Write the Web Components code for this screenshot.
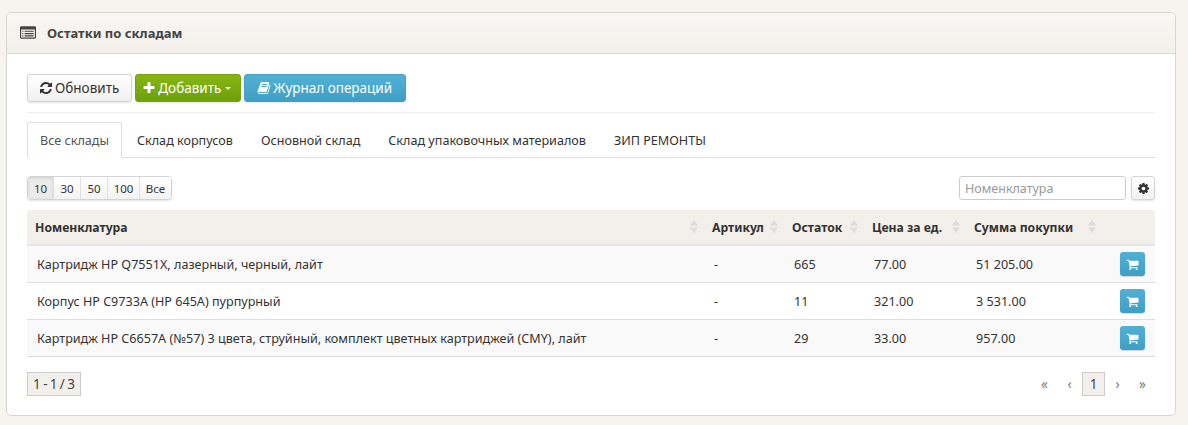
<!DOCTYPE html>
<html lang="ru">
<head>
<meta charset="utf-8">
<title>Остатки по складам</title>
<style>
  html, body { margin: 0; height: 100%; }
  body {
    background: #f7f4f0;
    color: #333;
    font: 12.6px "Noto Sans", "Open Sans", sans-serif;
    padding: 12px 12px 0 6px;
    box-sizing: border-box;
    overflow: hidden;
  }
</style>
</head>
<body>
<stock-panel heading="Остатки по складам">
  <div slot="toolbar" style="display:flex;gap:3px">
    <ui-button icon="refresh">Обновить</ui-button>
    <ui-button icon="plus" kind="green" caret>Добавить</ui-button>
    <ui-button icon="book" kind="blue">Журнал операций</ui-button>
  </div>
  <tab-bar slot="tabs" active="0">
    <span>Все склады</span>
    <span>Склад корпусов</span>
    <span>Основной склад</span>
    <span>Склад упаковочных материалов</span>
    <span>ЗИП РЕМОНТЫ</span>
  </tab-bar>
  <table-controls slot="controls"></table-controls>
  <stock-table slot="table"></stock-table>
  <table-footer slot="footer"></table-footer>
</stock-panel>

<script>
const ICONS = {
  refresh: 'M1639 1056q0 5-1 7-64 268-268 434.5t-478 166.5q-146 0-282.5-55t-243.5-157l-129 129q-19 19-45 19t-45-19-19-45v-448q0-26 19-45t45-19h448q26 0 45 19t19 45-19 45l-137 137q71 66 161 102t187 36q134 0 250-65t186-179q11-17 53-117 8-23 30-23h192q13 0 22.5 9.5t9.5 22.5zm25-800v448q0 26-19 45t-45 19h-448q-26 0-45-19t-19-45 19-45l138-138q-148-137-349-137-134 0-250 65t-186 179q-11 17-53 117-8 23-30 23h-199q-13 0-22.5-9.5t-9.5-22.5v-7q65-268 270-434.5t480-166.5q146 0 284 55.5t245 156.5l130-129q19-19 45-19t45 19 19 45z',
  plus: 'M1600 736v192q0 40-28 68t-68 28h-416v416q0 40-28 68t-68 28h-192q-40 0-68-28t-28-68v-416h-416q-40 0-68-28t-28-68v-192q0-40 28-68t68-28h416v-416q0-40 28-68t68-28h192q40 0 68 28t28 68v416h416q40 0 68 28t28 68z',
  book: 'M1703 478q40 57 18 129l-275 906q-19 64-76.5 107.5t-122.5 43.5h-923q-77 0-148.5-53.5t-99.5-131.5q-24-67-2-127 0-4 3-27t4-37q1-8-3-21.5t-3-19.5q2-11 8-21t16.5-23.5 16.5-23.5q23-38 45-91.5t30-91.5q3-10 .5-30t-.5-28q3-11 17-28t17-23q21-36 42-92t25-90q1-9-2.5-32t.5-28q4-13 22-30.5t22-22.5q19-26 42.5-84.5t27.5-96.5q1-8-3-25.5t-2-26.5q2-8 9-18t18-23 17-21q8-12 16.5-30.5t15-35 16-36 19.5-32 26.5-23.5 36-11.5 47.5 5.5l-1 3q38-9 51-9h761q74 0 114 56t18 130l-274 906q-36 119-71.5 153.5t-128.5 34.5h-869q-27 0-38 15-11 16-1 43 24 70 144 70h923q29 0 56-15.5t35-41.5l300-987q7-22 5-57 38 15 59 43zm-1064 2q-4 13 2 22.5t20 9.5h608q13 0 25.5-9.5t16.5-22.5l21-64q4-13-2-22.5t-20-9.5h-608q-13 0-25.5 9.5t-16.5 22.5zm-83 256q-4 13 2 22.5t20 9.5h608q13 0 25.5-9.5t16.5-22.5l21-64q4-13-2-22.5t-20-9.5h-608q-13 0-25.5 9.5t-16.5 22.5z',
  cog: 'M1152 896q0-106-75-181t-181-75-181 75-75 181 75 181 181 75 181-75 75-181zm512-109v222q0 12-8 23t-20 13l-185 28q-19 54-39 91 35 50 107 138 10 12 10 25t-9 23q-27 37-99 108t-94 71q-12 0-26-9l-138-108q-44 23-91 38-16 136-29 186-7 28-36 28h-222q-14 0-24.5-8.5t-11.5-21.5l-28-184q-49-16-90-37l-141 107q-10 9-25 9-14 0-25-11-126-114-165-168-7-10-7-23 0-12 8-23 15-21 51-66.5t54-70.5q-27-50-41-99l-183-27q-13-2-21-12.5t-8-23.5v-222q0-12 8-23t19-13l186-28q14-46 39-92-40-57-107-138-10-12-10-24 0-10 9-23 26-36 98.5-107.5t94.5-71.5q13 0 26 10l138 107q44-23 91-38 16-136 29-186 7-28 36-28h222q14 0 24.5 8.5t11.5 21.5l28 184q49 16 90 37l142-107q9-9 24-9 13 0 25 10 129 119 165 170 7 8 7 22 0 12-8 23-15 21-51 66.5t-54 70.5q26 50 41 98l183 28q13 2 21 12.5t8 23.5z',
  cart: 'M704 1536q0 52-38 90t-90 38-90-38-38-90 38-90 90-38 90 38 38 90zm896 0q0 52-38 90t-90 38-90-38-38-90 38-90 90-38 90 38 38 90zm128-1088v512q0 24-16.5 42.5t-40.5 21.5l-1044 122q13 60 13 70 0 16-24 64h920q26 0 45 19t19 45-19 45-45 19h-1024q-26 0-45-19t-19-45q0-11 8-31.5t16-36 21.5-40 15.5-29.5l-177-823h-204q-26 0-45-19t-19-45 19-45 45-19h256q16 0 28.5 6.5t19.5 15.5 13 24.5 8 26 5.5 29.5 4.5 26h1201q26 0 45 19t19 45z',
  list: 'M384 1184v64q0 13-9.5 22.5t-22.5 9.5h-64q-13 0-22.5-9.5t-9.5-22.5v-64q0-13 9.5-22.5t22.5-9.5h64q13 0 22.5 9.5t9.5 22.5zm0-256v64q0 13-9.5 22.5t-22.5 9.5h-64q-13 0-22.5-9.5t-9.5-22.5v-64q0-13 9.5-22.5t22.5-9.5h64q13 0 22.5 9.5t9.5 22.5zm0-256v64q0 13-9.5 22.5t-22.5 9.5h-64q-13 0-22.5-9.5t-9.5-22.5v-64q0-13 9.5-22.5t22.5-9.5h64q13 0 22.5 9.5t9.5 22.5zm1152 512v64q0 13-9.5 22.5t-22.5 9.5h-960q-13 0-22.5-9.5t-9.5-22.5v-64q0-13 9.5-22.5t22.5-9.5h960q13 0 22.5 9.5t9.5 22.5zm0-256v64q0 13-9.5 22.5t-22.5 9.5h-960q-13 0-22.5-9.5t-9.5-22.5v-64q0-13 9.5-22.5t22.5-9.5h960q13 0 22.5 9.5t9.5 22.5zm0-256v64q0 13-9.5 22.5t-22.5 9.5h-960q-13 0-22.5-9.5t-9.5-22.5v-64q0-13 9.5-22.5t22.5-9.5h960q13 0 22.5 9.5t9.5 22.5zm128 704v-832q0-13-9.5-22.5t-22.5-9.5h-1472q-13 0-22.5 9.5t-9.5 22.5v832q0 13 9.5 22.5t22.5 9.5h1472q13 0 22.5-9.5t9.5-22.5zm128-1088v1088q0 66-47 113t-113 47h-1472q-66 0-113-47t-47-113v-1088q0-66 47-113t113-47h1472q66 0 113 47t47 113z'
};

const iconSvg = (name, size) =>
  `<svg width="${size}" height="${size}" viewBox="0 0 1792 1792" fill="currentColor" aria-hidden="true"><path d="${ICONS[name]}"/></svg>`;

class UiButton extends HTMLElement {
  connectedCallback() {
    const root = this.attachShadow({ mode: 'open' });
    const icon = this.getAttribute('icon');
    root.innerHTML = `
      <style>
        :host { display: inline-flex; }
        .btn {
          display: inline-flex;
          align-items: center;
          gap: 2px;
          height: 28px;
          padding: 0 12px 0 11px;
          box-sizing: border-box;
          border-radius: 3px;
          border: 1px solid #d4d4d4;
          color: #333;
          font-size: 13.5px;
          background: linear-gradient(#fff, #f1f1f1);
          box-shadow: 0 1px 2px rgba(0,0,0,.1);
          white-space: nowrap;
        }
        svg { display: block; }
        :host([kind="green"]) .btn {
          background: linear-gradient(#86b512, #6fa00a);
          border-color: #74a30e;
          color: #fff;
          padding: 0 9px 0 6px;
        }
        :host([kind="blue"]) .btn {
          background: linear-gradient(#52b0d3, #3e9fc6);
          border-color: #449fc3;
          color: #fff;
          padding: 0 13px 0 12px;
        }
        .caret {
          width: 0; height: 0;
          margin-left: 2px;
          border: 3.5px solid transparent;
          border-top-color: currentColor;
          border-bottom: 0;
        }
      </style>
      <span class="btn">${icon ? iconSvg(icon, 14) : ''}<slot></slot>${this.hasAttribute('caret') ? '<span class="caret"></span>' : ''}</span>`;
  }
}
customElements.define('ui-button', UiButton);

class StockPanel extends HTMLElement {
  connectedCallback() {
    const root = this.attachShadow({ mode: 'open' });
    root.innerHTML = `
      <style>
        :host {
          display: block;
          background: #fff;
          border: 1px solid #d9d6d2;
          border-radius: 5px;
          height: 404px;
          box-sizing: border-box;
          overflow: hidden;
        }
        header {
          display: flex;
          align-items: center;
          gap: 11px;
          height: 41px;
          box-sizing: border-box;
          padding: 0 0 0 13px;
          background: linear-gradient(#f9f7f3, #f3f0eb);
          border-bottom: 1px solid #dcd9d5;
          color: #444;
          font-weight: 700;
          font-size: 13px;
        }
        .body { padding: 20px 20px 0; }
        .toolbar { padding-bottom: 10px; border-bottom: 1px solid #eee; margin-bottom: 9px; }
        svg { display: block; }
      </style>
      <header>${iconSvg('list', 16)}<span>${this.getAttribute('heading')}</span></header>
      <div class="body">
        <div class="toolbar"><slot name="toolbar"></slot></div>
        <slot name="tabs"></slot>
        <slot name="controls"></slot>
        <slot name="table"></slot>
        <slot name="footer"></slot>
      </div>`;
  }
}
customElements.define('stock-panel', StockPanel);

class TabBar extends HTMLElement {
  connectedCallback() {
    const root = this.attachShadow({ mode: 'open' });
    root.innerHTML = `
      <style>
        :host {
          display: flex;
          height: 36px;
          box-sizing: border-box;
          border-bottom: 1px solid #ddd;
        }
        ::slotted(span) {
          display: flex;
          align-items: center;
          padding: 0 12px 0 14px;
          margin-bottom: -1px;
          border: 1px solid transparent;
          border-radius: 3px 3px 0 0;
          color: #333;
          white-space: nowrap;
        }
        ::slotted(.active) {
          color: #555;
          background: #fff;
          border-color: #ddd #ddd #fff;
          padding: 0 12px;
        }
      </style>
      <slot></slot>`;
    this.children[Number(this.getAttribute('active') || 0)].classList.add('active');
  }
}
customElements.define('tab-bar', TabBar);

class TableControls extends HTMLElement {
  connectedCallback() {
    const root = this.attachShadow({ mode: 'open' });
    const sizes = ['10', '30', '50', '100', 'Все'];
    root.innerHTML = `
      <style>
        :host {
          display: flex;
          justify-content: space-between;
          align-items: center;
          margin: 18px 0 10px;
          height: 24px;
        }
        .sizes {
          display: grid;
          grid-template-columns: 25px 27px 27px 32px 32px;
          border: 1px solid #d4d4d4;
          border-radius: 4px;
          box-shadow: 0 1px 2px rgba(0,0,0,.12);
          overflow: hidden;
          font-size: 11.5px;
          height: 24px;
          box-sizing: border-box;
        }
        .sizes span {
          display: flex;
          align-items: center;
          justify-content: center;
          border-left: 1px solid #e0e0e0;
          background: linear-gradient(#fff, #f3f3f3);
        }
        .sizes span:first-child { border-left: 0; background: #ebebeb; box-shadow: inset 0 1px 3px rgba(0,0,0,.12); }
        .right { display: flex; gap: 5px; align-items: center; }
        input {
          width: 167px;
          height: 24px;
          box-sizing: border-box;
          border: 1px solid #ccc;
          border-radius: 3px;
          padding: 0 5px;
          font: 12.5px "Noto Sans", "Open Sans", sans-serif;
          color: #333;
          background: #fff;
        }
        input::placeholder { color: #999; opacity: 1; }
        .gear {
          display: flex;
          align-items: center;
          justify-content: center;
          width: 24px;
          height: 24px;
          box-sizing: border-box;
          border: 1px solid #d4d4d4;
          border-radius: 3px;
          background: linear-gradient(#fff, #f1f1f1);
          box-shadow: 0 1px 2px rgba(0,0,0,.1);
        }
        svg { display: block; }
      </style>
      <div class="sizes">${sizes.map(s => `<span>${s}</span>`).join('')}</div>
      <div class="right">
        <input placeholder="Номенклатура">
        <span class="gear">${iconSvg('cog', 13)}</span>
      </div>`;
  }
}
customElements.define('table-controls', TableControls);

const COLUMNS = [
  { title: 'Номенклатура', width: 677 },
  { title: 'Артикул', width: 80 },
  { title: 'Остаток', width: 80 },
  { title: 'Цена за ед.', width: 102 },
  { title: 'Сумма покупки', width: 136 },
  { title: '', width: 53 }
];

const ROWS = [
  ['Картридж HP Q7551X, лазерный, черный, лайт', '-', '665', '77.00', '51 205.00'],
  ['Корпус HP C9733A (HP 645A) пурпурный', '-', '11', '321.00', '3 531.00'],
  ['Картридж HP C6657A (№57) 3 цвета, струйный, комплект цветных картриджей (CMY), лайт', '-', '29', '33.00', '957.00']
];

class StockTable extends HTMLElement {
  connectedCallback() {
    const root = this.attachShadow({ mode: 'open' });
    const sortIcon = `<svg class="sort" width="8" height="15" viewBox="0 0 8 15" fill="#dcdcdc"><path d="M4 1l4 5.500H0zM4 14L0 8.500h8z"/></svg>`;
    root.innerHTML = `
      <style>
        :host { display: block; }
        table { border-collapse: separate; border-spacing: 0; table-layout: fixed; width: 100%; }
        th {
          position: relative;
          height: 34px;
          padding: 0 8px;
          text-align: left;
          background: #f3f0eb;
          border-bottom: 2px solid #e8e6e3;
          font-weight: 700;
          font-size: 12.2px;
          color: #333;
        }
        th .sort { position: absolute; right: 6px; top: 9px; }
        td {
          height: 36px;
          padding: 0 10px;
          border-bottom: 1px solid #ddd;
          color: #333;
        }
        tbody tr:nth-child(odd) td { background: #f9f9f9; }
        tbody tr:nth-child(even) td { background: #fff; }
        .cart {
          display: flex;
          align-items: center;
          justify-content: center;
          width: 25px;
          height: 24px;
          color: #fff;
          border-radius: 3px;
          background: linear-gradient(#52b0d3, #3e9fc6);
          box-shadow: 0 1px 1px rgba(0,0,0,.15);
        }
        td:last-child { padding: 0 0 0 18px; }
        svg { display: block; }
      </style>
      <table>
        <colgroup>${COLUMNS.map(c => `<col style="width:${c.width}px">`).join('')}</colgroup>
        <thead><tr>${COLUMNS.map(c => `<th>${c.title}${c.title ? sortIcon : ''}</th>`).join('')}</tr></thead>
        <tbody>${ROWS.map(r => `<tr>${r.map(v => `<td>${v}</td>`).join('')}<td><span class="cart">${iconSvg('cart', 13)}</span></td></tr>`).join('')}</tbody>
      </table>`;
  }
}
customElements.define('stock-table', StockTable);

class TableFooter extends HTMLElement {
  connectedCallback() {
    const root = this.attachShadow({ mode: 'open' });
    root.innerHTML = `
      <style>
        :host {
          display: flex;
          justify-content: space-between;
          align-items: center;
          margin-top: 15px;
          height: 24px;
        }
        .count, .current {
          display: flex;
          align-items: center;
          justify-content: center;
          box-sizing: border-box;
          height: 24px;
          background: #f3f0eb;
          border: 1px solid #ccc;
          color: #444;
        }
        .count { width: 54px; font-size: 13.5px; word-spacing: -1.2px; }
        .pages { display: flex; align-items: center; color: #777; font-size: 13.5px; }
        .pages span { display: flex; justify-content: center; width: 25px; }
        .pages .current { width: 23px; color: #444; }
      </style>
      <div class="count">1 - 1 / 3</div>
      <div class="pages"><span>«</span><span>‹</span><span class="current">1</span><span>›</span><span>»</span></div>`;
  }
}
customElements.define('table-footer', TableFooter);
</script>
</body>
</html>
